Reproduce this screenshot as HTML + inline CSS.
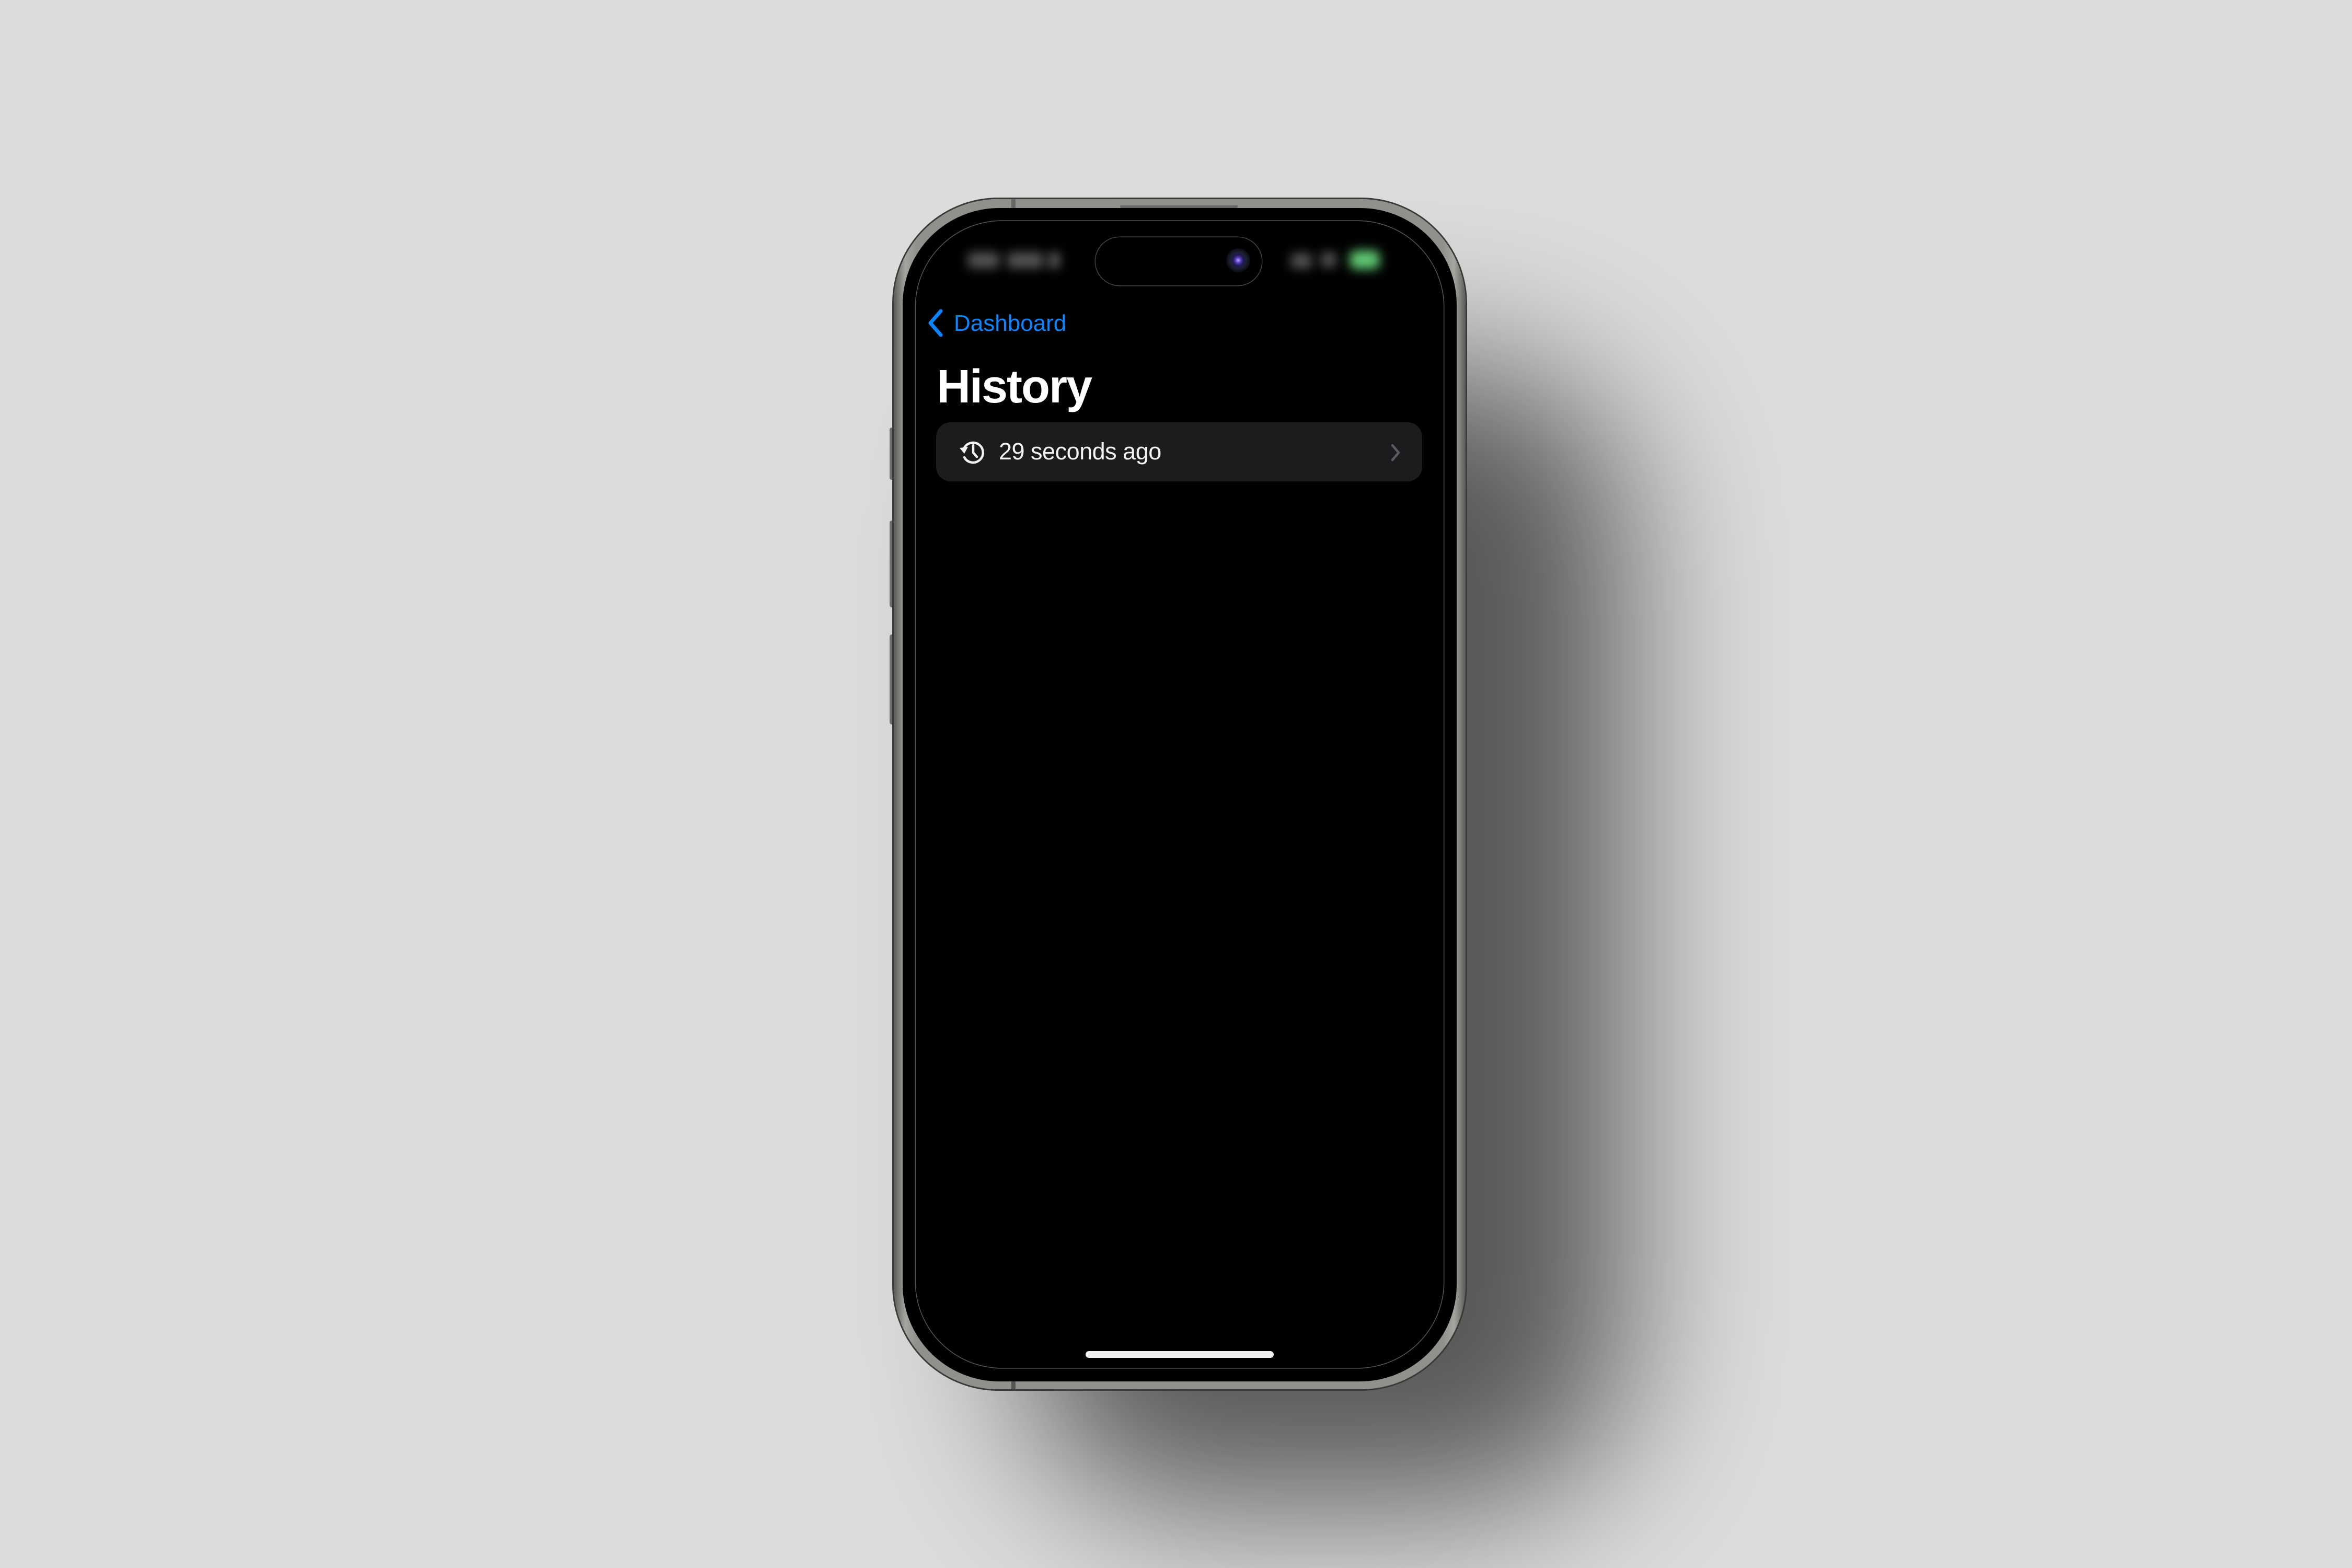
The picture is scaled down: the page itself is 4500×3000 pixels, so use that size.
<!DOCTYPE html>
<html><head><meta charset="utf-8"><style>
html,body{margin:0;padding:0;}
body{width:4500px;height:3000px;background:#dcdcdc;position:relative;overflow:hidden;font-family:"Liberation Sans",sans-serif;}
.shadow{position:absolute;left:1960px;top:700px;width:1150px;height:2180px;border-radius:300px;background:rgba(0,0,0,.6);filter:blur(150px);}
.frame{position:absolute;left:1710px;top:381px;width:1094px;height:2277px;border-radius:200px;background:linear-gradient(90deg,#5a5c58,#a3a59f 2%,#8f918c 4%,#8f918c 96%,#a3a59f 98%,#5a5c58);box-shadow:0 0 0 3px #3a3b38;}
.bezel{position:absolute;left:1727px;top:398px;width:1060px;height:2245px;border-radius:185px;background:#000;}
.screen{position:absolute;left:1752px;top:423px;width:1010px;height:2194px;border-radius:165px;background:#000;box-shadow:0 0 0 1.5px #555;overflow:hidden;}
.btn{position:absolute;left:1702px;width:10px;background:#6d6f6a;border-radius:4px;}
.island{position:absolute;left:2096px;top:454px;width:318px;height:92px;border-radius:46px;background:#000;box-shadow:0 0 0 1.5px #444;}
.cam{position:absolute;left:2346px;top:475px;width:46px;height:46px;border-radius:50%;background:radial-gradient(circle at 50% 50%,#b9a6ff 0,#5a3fc0 5px,#221a55 10px,#1b2030 16px,#0a0c12 23px);}
.blur{position:absolute;filter:blur(10px);}
</style></head><body>
<div class="shadow"></div>
<div class="btn" style="top:818px;height:100px"></div>
<div class="btn" style="top:996px;height:166px"></div>
<div class="btn" style="top:1214px;height:172px"></div>
<div class="frame"></div>
<div style="position:absolute;left:1935px;top:381px;width:8px;height:17px;background:#666"></div>
<div style="position:absolute;left:1935px;top:2643px;width:8px;height:15px;background:#555"></div>
<div style="position:absolute;left:2143px;top:393px;width:225px;height:9px;border-radius:0 0 8px 8px;background:#666"></div>
<div class="bezel"></div>
<div class="screen">
  <div class="blur" style="left:100px;top:60px;width:60px;height:30px;background:#555;border-radius:6px"></div>
  <div class="blur" style="left:175px;top:60px;width:70px;height:30px;background:#555;border-radius:6px"></div>
  <div class="blur" style="left:255px;top:60px;width:20px;height:30px;background:#666;border-radius:6px"></div>
  <div class="blur" style="left:718px;top:62px;width:40px;height:28px;background:#555;border-radius:4px"></div>
  <div class="blur" style="left:775px;top:60px;width:30px;height:28px;background:#555;border-radius:6px"></div>
  <div class="blur" style="left:830px;top:56px;width:58px;height:36px;background:#5fc872;border-radius:12px"></div>
  <svg style="position:absolute;left:20px;top:168px" width="36" height="54" viewBox="0 0 36 54"><path d="M28 4 L8 27 L28 50" fill="none" stroke="#0a84ff" stroke-width="7" stroke-linecap="round" stroke-linejoin="round"/></svg>
  <div style="position:absolute;left:73px;top:166px;font-size:44px;color:#0a84ff;line-height:60px;">Dashboard</div>
  <div style="position:absolute;left:40px;top:262px;font-size:90px;font-weight:bold;color:#fff;line-height:110px;letter-spacing:-2px">History</div>
  <div style="position:absolute;left:39px;top:385px;width:930px;height:113px;border-radius:28px;background:#1c1c1e;">
    <svg style="position:absolute;left:40px;top:29px" width="56" height="56" viewBox="0 0 56 56"><path d="M13 22 A19 19 0 1 1 14 38" fill="none" stroke="#f2f2f2" stroke-width="4.5" stroke-linecap="round"/><path d="M5 20 L14 31 L21 18 Z" fill="#f2f2f2"/><path d="M31 15 V29 L38 37" fill="none" stroke="#f2f2f2" stroke-width="4.5" stroke-linecap="round" stroke-linejoin="round"/></svg>
    <div style="position:absolute;left:120px;top:26px;font-size:45px;color:#f2f2f2;line-height:60px;letter-spacing:-0.5px">29 seconds ago</div>
    <svg style="position:absolute;left:867px;top:40px" width="24" height="36" viewBox="0 0 24 36"><path d="M6 4 L18 18 L6 32" fill="none" stroke="#5c5c60" stroke-width="4.5" stroke-linecap="round" stroke-linejoin="round"/></svg>
  </div>
  <div style="position:absolute;left:325px;top:2162px;width:360px;height:13px;border-radius:7px;background:#f0f0f0"></div>
</div>
<div class="island"></div>
<div class="cam"></div>
</body></html>
